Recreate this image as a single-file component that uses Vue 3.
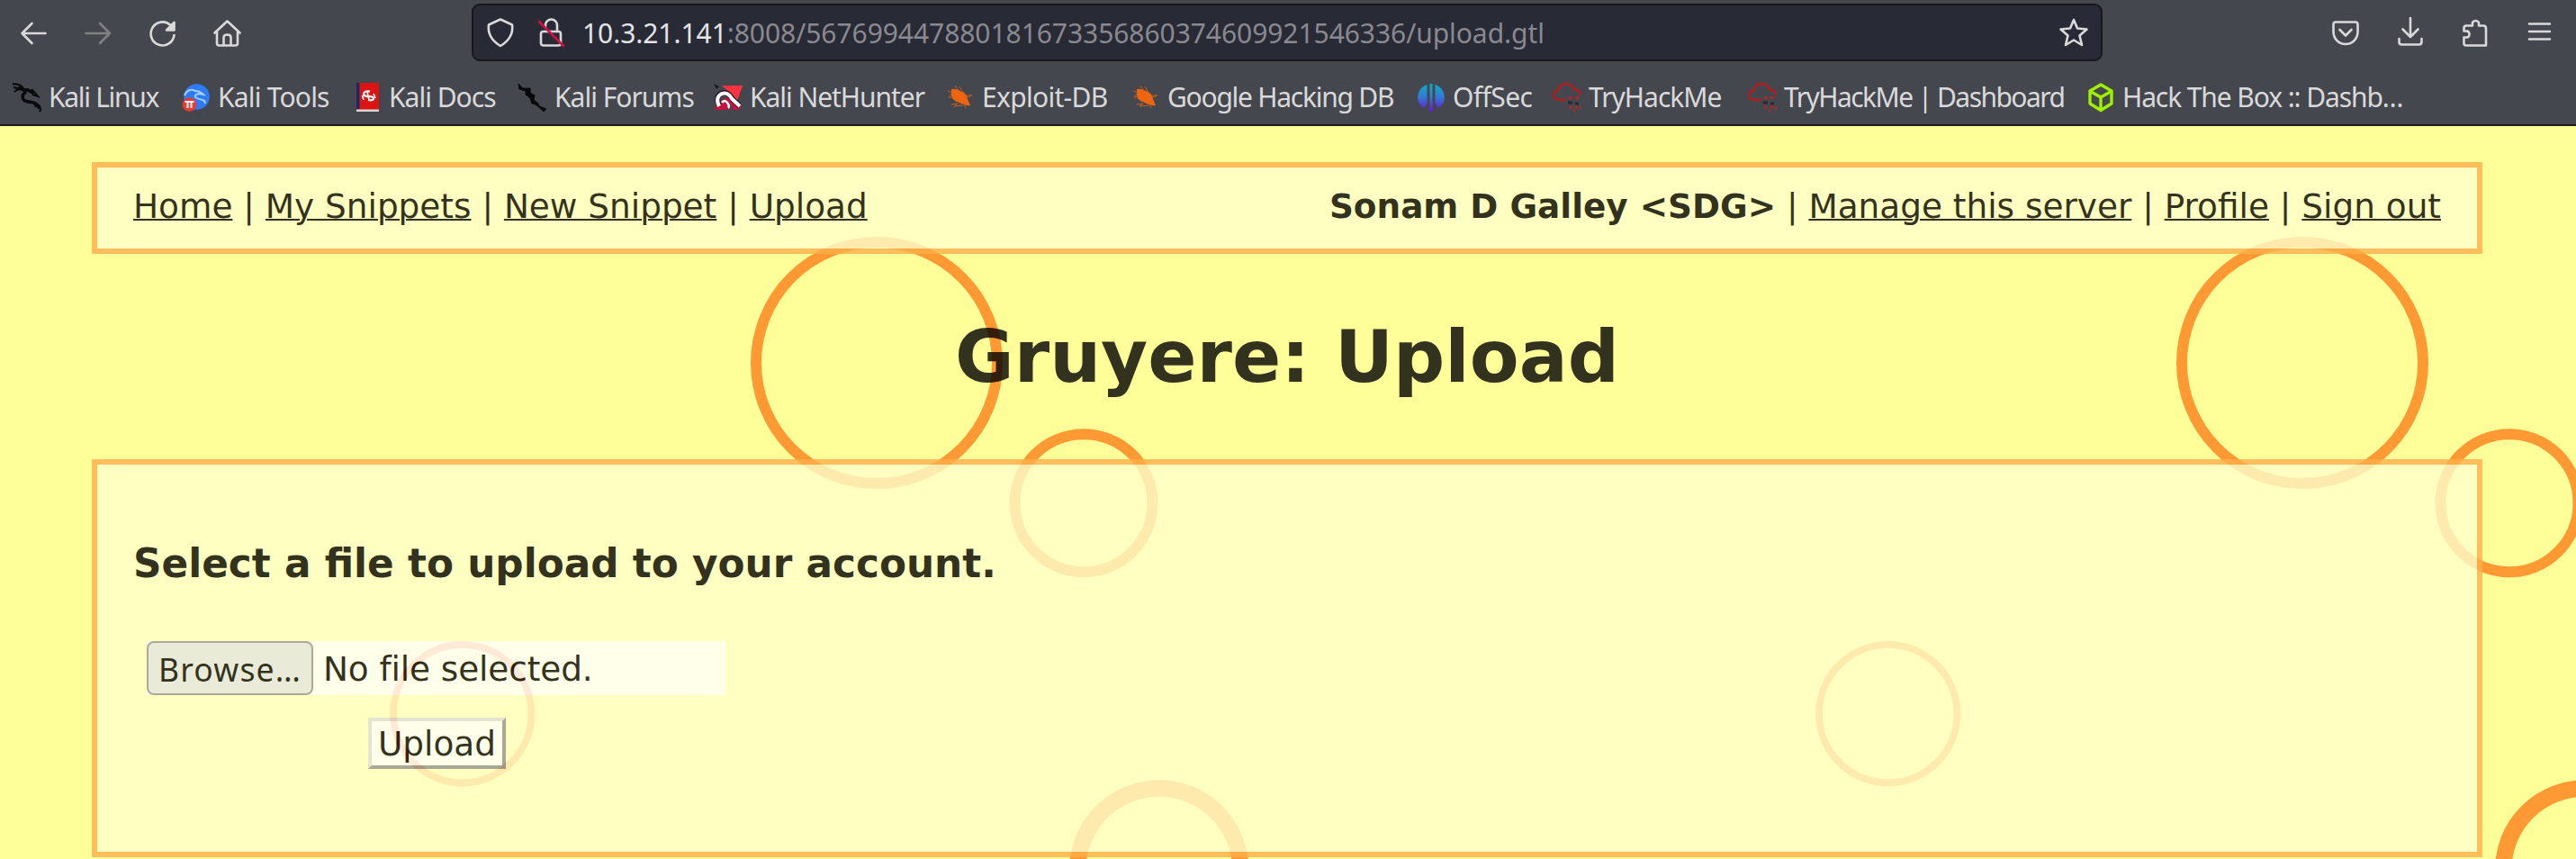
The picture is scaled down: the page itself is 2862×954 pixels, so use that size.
<script setup>
const links = ['Home', 'My Snippets', 'New Snippet', 'Upload']
const account = ['Manage this server', 'Profile', 'Sign out']
const bookmarks = [
  { icon: 'dragon', label: 'Kali Linux', track: -1.3 },
  { icon: 'tools', label: 'Kali Tools', track: -0.8 },
  { icon: 'docs', label: 'Kali Docs', track: -1 },
  { icon: 'forums', label: 'Kali Forums', track: -1 },
  { icon: 'hunter', label: 'Kali NetHunter', track: -1.05 },
  { icon: 'bug', label: 'Exploit-DB', track: -0.7 },
  { icon: 'bug', label: 'Google Hacking DB', track: -1.25 },
  { icon: 'offsec', label: 'OffSec', track: -0.6 },
  { icon: 'cloud', label: 'TryHackMe', track: -1 },
  { icon: 'cloud', label: 'TryHackMe | Dashboard', track: -1.55 },
  { icon: 'cube', label: 'Hack The Box :: Dashb…', track: -1.1 },
]
</script>

<template>
  <div class="browser">
    <header class="chrome">
      <div class="toolbar">
        <div class="nav-icons">
          <svg viewBox="0 0 32 32" class="ic"><path d="M28.500 16H3M13.500 5 2.500 16l11 11" /></svg>
          <svg viewBox="0 0 32 32" class="ic dim"><path d="M1.500 16h26M17 5l11 11-11 11" /></svg>
          <svg viewBox="0 0 32 32" class="ic"><path d="M24 6.500A13 13 0 1 0 28.500 18" /><path class="solid" d="M28.500 4v8.500h-8.500z" /></svg>
          <svg viewBox="0 0 32 32" class="ic"><path d="M1.500 15.500 15.500 2.500l14 13M4 14v13q0 2.500 2.500 2.500h18q2.500 0 2.500-2.500V14M11.500 29v-8q0-3.500 4-3.500t4 3.500v8" /></svg>
        </div>
        <div class="urlbar">
          <svg viewBox="0 0 32 32" class="ic"><path d="M16 1.500 29 7.500Q31 22 16 31 1 22 3 7.500z" /></svg>
          <svg viewBox="0 0 32 32" class="ic lock"><rect x="5" y="15" width="22" height="15.500" rx="2.500" /><path d="M10 10V8a6.500 6.500 0 0 1 13 0v7" /><path class="slash" d="M3 4 30 31" /></svg>
          <span class="url"><b>10.3.21.141</b>:8008/567699447880181673356860374609921546336/upload.gtl</span>
          <svg viewBox="0 0 32 32" class="ic star"><path d="m16 2 4 9.500 10.500 1-8 7 2.500 10.500-9-5.500-9 5.500 2.500-10.500-8-7 10.500-1z" /></svg>
        </div>
        <div class="tool-icons">
          <svg viewBox="0 0 32 32" class="ic"><path d="M5 4.500h22q2.500 0 2.500 2.500v8.500a13.500 13.500 0 0 1-27 0V7q0-2.500 2.500-2.500z" /><path d="m9.500 13 6.500 6.500 6.500-6.500" /></svg>
          <svg viewBox="0 0 32 32" class="ic"><path d="M16 0v21M7.500 12.500 16 21l8.500-8.500M3.500 23v3.500q0 3 3 3h19q3 0 3-3V23" /></svg>
          <svg viewBox="0 0 32 32" class="ic"><path d="M6 8.500h7V5a4 4 0 0 1 7 0v3.500h5q3 0 3 3v19H6q-2.500 0-2.500-2v-7h4a4 4 0 0 0 0-7h-4v-3.500q0-2.500 2.500-2.500" /></svg>
          <svg viewBox="0 0 32 32" class="ic"><path d="M4 6.500h23M4 15h23M4 23.500h23" /></svg>
        </div>
      </div>
      <nav class="bookmarks">
        <span v-for="b in bookmarks" :key="b.label" class="bookmark">
          <svg viewBox="0 0 32 32" class="fav">
            <g v-if="b.icon === 'dragon'" class="ink">
              <path d="M0 1.500q7-1 12 4.500M1 5l9 2M2 10q4-4 9-2" />
              <path class="thick" d="M7 4q5 2 6 5M11 8.500q6-2.500 12 3.500M15 10q-5 3-3.500 7.500Q13 21 21 21.500q7 1 8.500 7" />
              <path d="m21 7 7 8-6-2M24 23l2 4M30 25l1 5-1 2" />
            </g>
            <g v-else-if="b.icon === 'tools'">
              <circle cx="16.500" cy="15.500" r="14.300" fill="#2b7cf8" />
              <path d="M3 14Q7 5 15 9q5 0 9 4l-5-1q-5 1-4 4 3 2 8 3 3 1 3 4" fill="none" stroke="#a9cdfb" stroke-width="2" />
              <circle cx="8.500" cy="24" r="7.800" fill="#e93a33" />
              <path d="M3.500 21h10M6.500 21v7M10.500 21v7" fill="none" stroke="#fff" stroke-width="2" />
            </g>
            <g v-else-if="b.icon === 'docs'">
              <path d="M4 0h25v32H4z" fill="#dd1414" />
              <path d="M4 0h3.500v29H4z" fill="#182a63" />
              <path d="M4 29.500h25V32H4z" fill="#d5d5d5" />
              <path d="M19 9.500q-7-1-7 3.500 1 2.500 6 2 5 0 5 3-1 2-6 1" fill="none" stroke="#fff" stroke-width="2.200" />
              <path d="m16 10 2 9M23 12l2 5M10.500 14l1.500 5" fill="none" stroke="#fff" stroke-width="1.600" />
            </g>
            <g v-else-if="b.icon === 'forums'" class="ink">
              <path class="full" d="m0 1 5 5 8 0 0 5 5 3-1 5 5 4 1 3 8 3-3 3-3-3-6-5-4-1-2-6-5-4 0-4-7-2z" />
            </g>
            <g v-else-if="b.icon === 'hunter'">
              <path d="M9 3h23l-6 17-6-7z" fill="#ff3340" />
              <path d="M2 23v7h13l6-6 0 6h6l4-4-12-12z" fill="#c51142" />
              <path d="M6 25Q1 15 9 11.500q7-2 11 5.500l9 9" fill="none" stroke="#1d1d21" stroke-width="6" />
              <path d="M6 26Q1 16 9 12q7-2 11 5.500l9 8.500" fill="none" stroke="#fff" stroke-width="4" />
              <path d="M9 22q3-4 6 0t1 6" fill="none" stroke="#fff" stroke-width="2.500" />
              <path d="m0 1 6 3-3 3z" fill="#17191c" />
            </g>
            <g v-else-if="b.icon === 'bug'">
              <path d="M6 7q5-1 10 2 7 2 8 9l3 7q-6 1-12-3-8-2-9-8z" fill="#ee6510" />
              <path d="m2 9 5 2-4 5 5 0M6 24l7-1-4 3 10-1M10 3l4 6M15 4l4 7M23 14l6 0-6 2M20 23l2 5" fill="none" stroke="#c2601f" stroke-width="1" />
            </g>
            <g v-else-if="b.icon === 'offsec'">
              <linearGradient id="offsecFade" x2="0" y2="32" gradientUnits="userSpaceOnUse"><stop stop-color="#06b4c8" /><stop offset=".5" stop-color="#3578d2" /><stop offset="1" stop-color="#6a12d8" /></linearGradient>
              <path d="M11.500 2v20l-3 6Q1 24 1 16 2 5 11.500 2zM20.500 2v20l3 6q7.500-4 7.500-12Q30 5 20.500 2zM14.500 1h3v25l1 3-1.500 3h-2l-1.500-3 1-3z" fill="url(#offsecFade)" />
            </g>
            <g v-else-if="b.icon === 'cloud'" fill="none">
              <path d="M15 19H7Q1 18 1 13.500 1 9 6.500 8.500 8 1 15 1t8.500 6q7 1 7 7" stroke="#b01d20" stroke-width="2.400" />
              <path d="M18 16.500h4m3 0h4M25 28l3-2m2 2h2M18 27h3m2 4h2" stroke="#a8282c" stroke-width="3" />
              <path d="M17 22h5m3 1h4" stroke="#28292d" stroke-width="3" />
            </g>
            <path v-else d="M16 2 28 9v14l-12 7.500L4 23V9zM4.500 9.500 16 16l11.500-6.500M16 16v13" fill="none" stroke="#9fef00" stroke-width="3.400" stroke-linejoin="round" />
          </svg>
          <span :style="{ letterSpacing: b.track + 'px' }">{{ b.label }}</span>
        </span>
      </nav>
    </header>

    <main class="page">
      <svg class="holes" viewBox="0 140 2862 814">
        <g v-for="x in [0, 1584]" :key="x" :transform="`translate(${x} 0)`">
          <circle cx="974" cy="403" r="134" stroke-width="12" />
          <circle cx="1204" cy="558.700" r="76.500" stroke-width="12" />
          <circle cx="513.700" cy="792.700" r="76.700" stroke-width="8" />
          <circle cx="1287.700" cy="966" r="90.500" stroke-width="18.500" />
        </g>
      </svg>
      <div class="box menu">
        <div><template v-for="(l, i) in links" :key="l"><template v-if="i"> | </template><a>{{ l }}</a></template></div>
        <div class="right"><b>Sonam D Galley &lt;SDG&gt;</b><template v-for="l in account" :key="l"> | <a>{{ l }}</a></template></div>
      </div>
      <h1>Gruyere: Upload</h1>
      <section class="box content">
        <h3>Select a file to upload to your account.</h3>
        <div class="file"><span class="browse">Browse…</span><span class="none">No file selected.</span></div>
        <div class="submit">Upload</div>
      </section>
    </main>
  </div>
</template>

<style>
body { background: #ffff99; overflow: hidden; }
</style>

<style scoped>
.browser { width: 2862px; height: 954px; overflow: hidden; background: #ffff99; }
.chrome { box-sizing: border-box; height: 140px; background: #45474e; border-bottom: 2px solid #1c1c1f; font: 30px "Noto Sans", sans-serif; color: #d9d9da; }
.toolbar { display: flex; height: 74px; align-items: flex-start; }
.nav-icons { display: flex; gap: 39.500px; width: 502px; padding: 21px 0 0 22px; }
.ic { width: 32px; height: 32px; flex: none; fill: none; stroke: #d9d9da; stroke-width: 2.600; stroke-linejoin: round; stroke-linecap: round; overflow: visible; }
.dim { opacity: .4; }
.solid { fill: #d9d9da; }
.slash { stroke: #d3103f; }
.urlbar { box-sizing: border-box; width: 1812px; height: 64px; margin-top: 4px; border: 2px solid #17171c; border-radius: 9px; background: #282a36; display: flex; align-items: center; padding: 0 14px; }
.lock { margin-left: 24px; }
.url { margin-left: 19px; white-space: nowrap; color: #89898f; letter-spacing: -.06px; }
.url b { font-weight: 400; color: #e4e4e6; }
.star { margin-left: auto; }
.tool-icons { display: flex; gap: 40px; padding: 20px 0 0 254px; }
.bookmarks { display: grid; grid-template-columns: 188px 190px 184px 217px 258px 206px 317px 151px 217px 376px 360px; margin-left: 14px; padding-top: 18px; }
.bookmark { display: flex; align-items: center; height: 32px; gap: 8px; white-space: nowrap; line-height: 32px; }
.fav { width: 32px; height: 32px; flex: none; overflow: visible; }
.ink { fill: none; stroke: #08090a; stroke-width: 2; }
.ink .thick { stroke-width: 3.500; }
.ink .full { fill: #08090a; stroke-width: 1; }
.page { position: relative; height: 814px; padding: 40px 104px 0 102px; font: 37.400px/44px "DejaVu Sans", sans-serif; color: #000; box-sizing: border-box; }
.holes { position: absolute; left: 0; top: 0; width: 2862px; height: 814px; fill: none; stroke: #ff9933; }
.box { position: relative; box-sizing: border-box; background: #ffffcc; border: 6px solid #ffaf4a; opacity: .8; }
.menu { height: 102px; padding: 21px 40px 0; display: flex; justify-content: space-between; white-space: nowrap; }
.menu a { text-decoration: underline; text-decoration-thickness: 2px; }
h1 { position: relative; opacity: .8; margin: 0; height: 228px; padding-top: 65px; box-sizing: border-box; text-align: center; font-size: 80px; line-height: 100px; font-weight: 700; }
.content { height: 442px; padding: 85px 40px 0; }
h3 { margin: 0; font-size: 43.760px; line-height: 50px; font-weight: 700; }
.file { box-sizing: border-box; display: flex; align-items: center; width: 643px; height: 60px; margin: 61px 0 0 15px; background: #fff; white-space: nowrap; }
.browse { box-sizing: border-box; width: 185px; height: 60px; border: 2px solid #969696; border-radius: 8px; background: #e6e6e8; text-align: center; font: 35.500px/58px "Noto Sans", sans-serif; letter-spacing: 1.200px; margin-right: 11px; }
.none { padding-top: 2px; letter-spacing: -.1px; }
.submit { box-sizing: border-box; width: 153px; height: 57px; margin: 25px 0 0 261px; border: 4px solid; border-color: #dedede #939393 #939393 #dedede; background: #fff; text-align: center; line-height: 50px; }
</style>
